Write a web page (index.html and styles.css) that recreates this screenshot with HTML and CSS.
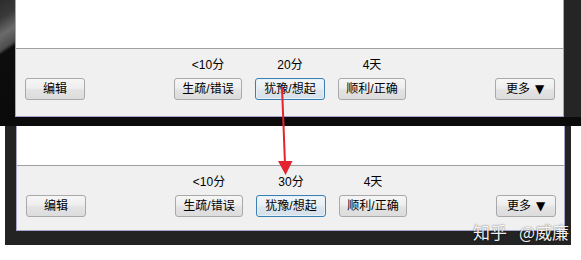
FILE: index.html
```html
<!DOCTYPE html>
<html lang="zh-CN">
<head>
<meta charset="utf-8">
<title>复习按钮对比</title>
<link rel="stylesheet" href="styles.css">
</head>
<body>
<div class="page">
  <section class="shot shot-top">
    <div class="frame-l"></div>
    <div class="window">
      <div class="canvas canvas-top"></div>
      <div class="toolbar toolbar-top">
        <button class="btn btn-side">编辑</button>
        <div class="grades">
          <div class="grade"><span class="due">&lt;10分</span><button class="btn">生疏/错误</button></div>
          <div class="grade"><span class="due">20分</span><button class="btn btn-focus">犹豫/想起</button></div>
          <div class="grade"><span class="due">4天</span><button class="btn">顺利/正确</button></div>
        </div>
        <button class="btn btn-side btn-more">更多<span class="tri">▼</span></button>
      </div>
    </div>
    <div class="frame-r"></div>
  </section>
  <section class="shot shot-bottom">
    <div class="window">
      <div class="canvas canvas-bottom"></div>
      <div class="toolbar toolbar-bottom">
        <button class="btn btn-side">编辑</button>
        <div class="grades">
          <div class="grade"><span class="due">&lt;10分</span><button class="btn">生疏/错误</button></div>
          <div class="grade"><span class="due">30分</span><button class="btn btn-focus">犹豫/想起</button></div>
          <div class="grade"><span class="due">4天</span><button class="btn">顺利/正确</button></div>
        </div>
        <button class="btn btn-side btn-more">更多<span class="tri">▼</span></button>
      </div>
    </div>
  </section>
  <svg class="arrow" width="581" height="260" viewBox="0 0 581 260" aria-hidden="true">
    <line x1="282" y1="87" x2="285" y2="164" stroke="#e3242f" stroke-width="2"/>
    <polygon points="278,161 292.5,161 285.6,175" fill="#e3242f"/>
  </svg>
  <div class="watermark">知乎<span class="wm-at">@威廉</span></div>
</div>
</body>
</html>
```

FILE: styles.css
```css
* { box-sizing: border-box; }

html, body {
  margin: 0;
  padding: 0;
  background: #ffffff;
}

.page {
  position: relative;
  width: 581px;
  height: 260px;
  overflow: hidden;
  font-family: "Liberation Sans", "Noto Sans CJK SC", sans-serif;
  font-size: 12px;
  color: #000;
}

.shot-top {
  display: flex;
  align-items: flex-start;
  height: 126px;
  background: #0b0b0b;
}

.frame-l {
  width: 15px;
  height: 117px;
  background: linear-gradient(146deg, #2c2c2c 0px, #3a3a3a 16px, #6b6b6b 30px, #4d4d4d 42px, #0d0d0d 46px, #0a0a0a 100%);
}

.frame-r {
  width: 17px;
  height: 117px;
  background: #252525;
}

.window {
  width: 549px;
  display: flex;
  flex-direction: column;
  border-left: 1px solid #a4a4cc;
  border-right: 1px solid #a4a4cc;
  border-bottom: 1px solid #a4a4cc;
}

.canvas {
  background: #ffffff;
  border-bottom: 1px solid #a0a0a0;
}
.canvas-top { height: 49px; }
.canvas-bottom { height: 40px; }

.toolbar {
  display: grid;
  grid-template-columns: 1fr auto 1fr;
  align-items: end;
  align-content: start;
  padding: 8px 8px 0 9px;
  background: #f0f0f0;
}
.toolbar-top { height: 67px; }
.toolbar-bottom { height: 64px; }

.shot-bottom {
  width: 566px;
  margin-left: 5px;
  padding: 0 6px 14px 11px;
  background: #232323;
}

.grades {
  display: flex;
  gap: 13px;
}

.grade {
  display: flex;
  flex-direction: column;
  align-items: center;
  gap: 5px;
}

.due {
  height: 16px;
  line-height: 16px;
  white-space: nowrap;
}

.btn {
  height: 22px;
  width: 68px;
  padding: 0;
  margin: 0;
  font: inherit;
  line-height: 20px;
  color: #000;
  border: 1px solid #a9a9a9;
  border-radius: 3px;
  background: linear-gradient(#f6f6f6 0%, #eeeeee 45%, #e3e3e3 55%, #dcdcdc 100%);
  white-space: nowrap;
}

.btn-focus {
  width: 70px;
  border-color: #3c7fb1;
  box-shadow: inset 0 0 0 1px #e6f0f8;
  background: linear-gradient(#f2f6fa 0%, #e9eff5 45%, #dde6ee 55%, #d6e0e9 100%);
}

.btn-side {
  width: 60px;
  justify-self: start;
}

.btn-more {
  justify-self: end;
}

.tri {
  margin-left: 5px;
  font-family: "DejaVu Sans", sans-serif;
  font-size: 12px;
}

.arrow {
  position: absolute;
  left: 0;
  top: 0;
  pointer-events: none;
}

.watermark {
  position: absolute;
  left: 473px;
  top: 221px;
  font-family: "Noto Sans CJK SC", sans-serif;
  font-size: 17px;
  line-height: 22px;
  color: rgba(255, 255, 255, 0.95);
  text-shadow: 0 0 1px rgba(0, 0, 0, 0.5), 0 0 2px rgba(0, 0, 0, 0.25);
  white-space: nowrap;
}

.wm-at {
  margin-left: 12px;
}
```
